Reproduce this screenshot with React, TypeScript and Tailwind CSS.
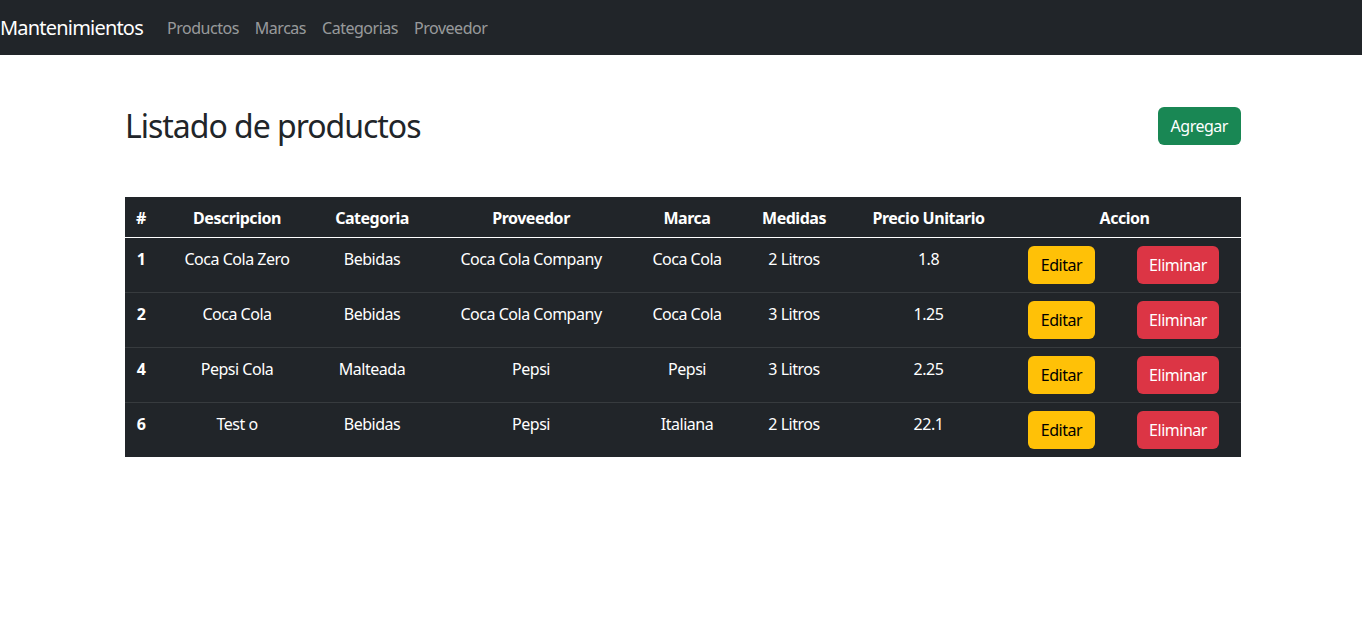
import React from "react";

const rows = [
  { id: "1", desc: "Coca Cola Zero", cat: "Bebidas", prov: "Coca Cola Company", marca: "Coca Cola", med: "2 Litros", precio: "1.8" },
  { id: "2", desc: "Coca Cola", cat: "Bebidas", prov: "Coca Cola Company", marca: "Coca Cola", med: "3 Litros", precio: "1.25" },
  { id: "4", desc: "Pepsi Cola", cat: "Malteada", prov: "Pepsi", marca: "Pepsi", med: "3 Litros", precio: "2.25" },
  { id: "6", desc: "Test o", cat: "Bebidas", prov: "Pepsi", marca: "Italiana", med: "2 Litros", precio: "22.1" },
];

export default function App() {
  return (
    <div className="min-h-[639px] bg-white text-[#212529] font-['Noto_Sans',sans-serif] tracking-[-0.03em]">
      <nav className="h-[55px] bg-[#212529] flex items-center">
        <span className="text-white text-[20px] leading-[30px] mr-4 tracking-[-0.04em]">Mantenimientos</span>
        <div className="flex text-[16px] leading-6 text-[rgba(255,255,255,0.55)]">
          <a className="px-2">Productos</a>
          <a className="px-2">Marcas</a>
          <a className="px-2">Categorias</a>
          <a className="px-2">Proveedor</a>
        </div>
      </nav>
      <div className="w-[1116px] ml-[125px] pt-[52px]">
        <div className="flex items-center justify-between">
          <h2 className="text-[32px] leading-[38px] font-normal tracking-[-0.032em]">Listado de productos</h2>
          <button className="h-[38px] px-[13px] rounded-[6px] bg-[#198754] text-white text-[16px]">Agregar</button>
        </div>
        <table className="mt-[52px] w-full table-fixed border-collapse bg-[#212529] text-white text-[16px] leading-6">
          <colgroup>
            <col className="w-[32px]" />
            <col className="w-[160px]" />
            <col className="w-[110px]" />
            <col className="w-[208px]" />
            <col className="w-[104px]" />
            <col className="w-[110px]" />
            <col className="w-[159px]" />
            <col className="w-[107px]" />
            <col className="w-[126px]" />
          </colgroup>
          <thead>
            <tr className="border-b border-white">
              <th className="px-2 pt-[9px] pb-[7px] text-center font-bold">#</th>
              <th className="px-2 pt-[9px] pb-[7px] text-center font-bold">Descripcion</th>
              <th className="px-2 pt-[9px] pb-[7px] text-center font-bold">Categoria</th>
              <th className="px-2 pt-[9px] pb-[7px] text-center font-bold">Proveedor</th>
              <th className="px-2 pt-[9px] pb-[7px] text-center font-bold">Marca</th>
              <th className="px-2 pt-[9px] pb-[7px] text-center font-bold">Medidas</th>
              <th className="px-2 pt-[9px] pb-[7px] text-center font-bold">Precio Unitario</th>
              <th colSpan={2} className="px-2 pt-[9px] pb-[7px] text-center font-bold">Accion</th>
            </tr>
          </thead>
          <tbody>
            {rows.map((r, i) => (
              <tr key={r.id} className={i < rows.length - 1 ? "border-b border-[#373b3e]" : ""}>
                <td className="px-2 pt-[9px] pb-[7px] align-top text-center font-bold">{r.id}</td>
                <td className="px-2 pt-[9px] pb-[7px] align-top text-center">{r.desc}</td>
                <td className="px-2 pt-[9px] pb-[7px] align-top text-center">{r.cat}</td>
                <td className="px-2 pt-[9px] pb-[7px] align-top text-center">{r.prov}</td>
                <td className="px-2 pt-[9px] pb-[7px] align-top text-center">{r.marca}</td>
                <td className="px-2 pt-[9px] pb-[7px] align-top text-center">{r.med}</td>
                <td className="px-2 pt-[9px] pb-[7px] align-top text-center">{r.precio}</td>
                <td className="p-2 align-top text-center">
                  <button className="h-[38px] px-[13px] rounded-[6px] bg-[#ffc107] text-black">Editar</button>
                </td>
                <td className="p-2 align-top text-center">
                  <button className="h-[38px] px-3 rounded-[6px] bg-[#dc3545] text-white">Eliminar</button>
                </td>
              </tr>
            ))}
          </tbody>
        </table>
      </div>
    </div>
  );
}
